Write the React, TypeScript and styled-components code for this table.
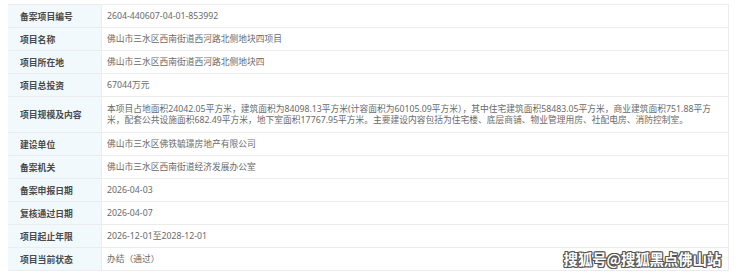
import React from "react";
import styled, { createGlobalStyle } from "styled-components";

const Global = createGlobalStyle`
  html, body { margin: 0; padding: 0; background: #ffffff; }
  body { font-family: "Noto Sans", "Noto Sans CJK SC", sans-serif; }
`;

const Page = styled.div`
  position: relative;
  width: 740px;
  height: 275px;
  padding: 4px 11px 0 8px;
  box-sizing: border-box;
`;

const Table = styled.div`
  display: flex;
  flex-direction: column;
  border-top: 1px solid #ececec;
  border-right: 1px solid #ececec;
`;

const Row = styled.div<{ $tall?: boolean }>`
  display: grid;
  grid-template-columns: 94px 1fr;
  height: ${(p) => (p.$tall ? "36px" : "23px")};
  border-bottom: 1px solid #ececec;
  box-sizing: border-box;
`;

const Label = styled.div`
  background: #f2f9fc;
  display: flex;
  align-items: center;
  padding-left: 12px;
  font-size: 8.8px;
  font-weight: 700;
  color: #4a4a4a;
  border-right: 1px solid #ececec;
`;

const Value = styled.div`
  display: flex;
  align-items: center;
  padding-left: 5px;
  font-size: 8.75px;
  line-height: 11px;
  color: #6a6a6a;
  white-space: nowrap;
`;

const Watermark = styled.div`
  position: absolute;
  right: 19px;
  bottom: 6px;
  font-family: "Noto Sans CJK SC", sans-serif;
  font-size: 14.5px;
  font-weight: 700;
  color: #ffffff;
  letter-spacing: -0.2px;
  text-shadow: 1px 0 0 #555, -1px 0 0 #555, 0 1px 0 #555, 0 -1px 0 #555,
    1px 1px 0 #555, -1px -1px 0 #555, 1px -1px 0 #555, -1px 1px 0 #555;
`;

const rows: { label: string; value: React.ReactNode; tall?: boolean }[] = [
  { label: "备案项目编号", value: "2604-440607-04-01-853992" },
  { label: "项目名称", value: "佛山市三水区西南街道西河路北侧地块四项目" },
  { label: "项目所在地", value: "佛山市三水区西南街道西河路北侧地块四" },
  { label: "项目总投资", value: "67044万元" },
  {
    label: "项目规模及内容",
    tall: true,
    value: (
      <span>
        本项目占地面积24042.05平方米，建筑面积为84098.13平方米(计容面积为60105.09平方米），其中住宅建筑面积58483.05平方米，商业建筑面积751.88平方
        <br />
        米，配套公共设施面积682.49平方米，地下室面积17767.95平方米。主要建设内容包括为住宅楼、底层商铺、物业管理用房、社配电房、消防控制室。
      </span>
    ),
  },
  { label: "建设单位", value: "佛山市三水区佛铁毓璟房地产有限公司" },
  { label: "备案机关", value: "佛山市三水区西南街道经济发展办公室" },
  { label: "备案申报日期", value: "2026-04-03" },
  { label: "复核通过日期", value: "2026-04-07" },
  { label: "项目起止年限", value: "2026-12-01至2028-12-01" },
  { label: "项目当前状态", value: "办结（通过）" },
];

export default function App() {
  return (
    <>
      <Global />
      <Page>
        <Table>
          {rows.map((r) => (
            <Row key={r.label} $tall={r.tall}>
              <Label>{r.label}</Label>
              <Value>{r.value}</Value>
            </Row>
          ))}
        </Table>
        <Watermark>搜狐号@搜狐黑点佛山站</Watermark>
      </Page>
    </>
  );
}
